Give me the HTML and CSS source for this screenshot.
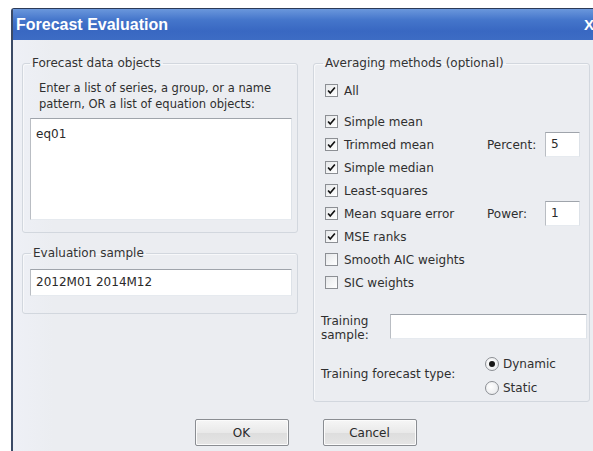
FILE: index.html
```html
<!DOCTYPE html>
<html>
<head>
<meta charset="utf-8">
<title>Forecast Evaluation</title>
<link rel="stylesheet" href="styles.css">
</head>
<body>
<div class="window">
  <div class="titlebar">
    <span class="title">Forecast Evaluation</span>
    <span class="close">X</span>
  </div>
  <div class="content">
    <div class="columns">
      <div class="leftcol">
        <fieldset class="group g-objects">
          <legend>Forecast data objects</legend>
          <p class="hint">Enter a list of series, a group, or a name<br>pattern, OR a list of equation objects:</p>
          <div class="edit textarea">eq01</div>
        </fieldset>
        <fieldset class="group g-sample">
          <legend>Evaluation sample</legend>
          <div class="edit sample">2012M01 2014M12</div>
        </fieldset>
      </div>

      <fieldset class="group g-avg">
        <legend>Averaging methods (optional)</legend>
        <div class="row all">
          <label class="check"><span class="box on"><svg viewBox="0 0 13 13"><path d="M2.5 6.5 L5 9.5 L10.5 3"/></svg></span>All</label>
        </div>
        <div class="methods">
          <div class="row"><label class="check"><span class="box on"><svg viewBox="0 0 13 13"><path d="M2.5 6.5 L5 9.5 L10.5 3"/></svg></span>Simple mean</label></div>
          <div class="row"><label class="check"><span class="box on"><svg viewBox="0 0 13 13"><path d="M2.5 6.5 L5 9.5 L10.5 3"/></svg></span>Trimmed mean</label><span class="param">Percent:</span><div class="edit small">5</div></div>
          <div class="row"><label class="check"><span class="box on"><svg viewBox="0 0 13 13"><path d="M2.5 6.5 L5 9.5 L10.5 3"/></svg></span>Simple median</label></div>
          <div class="row"><label class="check"><span class="box on"><svg viewBox="0 0 13 13"><path d="M2.5 6.5 L5 9.5 L10.5 3"/></svg></span>Least-squares</label></div>
          <div class="row"><label class="check"><span class="box on"><svg viewBox="0 0 13 13"><path d="M2.5 6.5 L5 9.5 L10.5 3"/></svg></span>Mean square error</label><span class="param">Power:</span><div class="edit small">1</div></div>
          <div class="row"><label class="check"><span class="box on"><svg viewBox="0 0 13 13"><path d="M2.5 6.5 L5 9.5 L10.5 3"/></svg></span>MSE ranks</label></div>
          <div class="row"><label class="check"><span class="box"></span>Smooth AIC weights</label></div>
          <div class="row"><label class="check"><span class="box"></span>SIC weights</label></div>
        </div>
        <div class="training">
          <span class="tlabel">Training<br>sample:</span>
          <div class="edit tfield"></div>
        </div>
        <div class="ftype">
          <span class="flabel">Training forecast type:</span>
          <div class="radios">
            <label class="radio"><span class="dot on"></span>Dynamic</label>
            <label class="radio"><span class="dot"></span>Static</label>
          </div>
        </div>
      </fieldset>
    </div>
    <div class="buttons">
      <button class="btn">OK</button>
      <button class="btn">Cancel</button>
    </div>
  </div>
</div>
</body>
</html>
```

FILE: styles.css
```css
html, body {
  margin: 0;
  padding: 0;
  background: #ffffff;
  overflow: hidden;
}

body {
  font-family: "DejaVu Sans", Tahoma, sans-serif;
  font-size: 12px;
  color: #2f2f2f;
}

/* dialog frame */
.window {
  margin: 8px 0 0 11px;
  width: 587px;
  height: 443px;
  border-left: 2px solid #3b4a66;
  border-top: 1px solid #2c3b58;
  border-radius: 3px 0 0 0;
  background: linear-gradient(90deg, #eef0f6 0, #ebedf1 40px);
  box-sizing: border-box;
}

.titlebar {
  height: 31px;
  display: flex;
  align-items: center;
  justify-content: space-between;
  padding: 0 4px 0 3px;
  background: linear-gradient(#6a97dc 0, #4576cb 35%, #3968c2 70%, #3d6cc4 100%);
  color: #ffffff;
  font-family: "Liberation Sans", Arial, sans-serif;
  font-weight: bold;
  font-size: 16px;
}

.close {
  font-size: 15px;
}

.content {
  padding: 16px 0 0 9px;
}

.columns {
  display: flex;
  align-items: flex-start;
  gap: 15px;
}

/* group boxes */
.group {
  margin: 0;
  border: 1px solid #d2d7de;
  border-radius: 3px;
  box-shadow: inset 1px 1px 0 #f7f8fa;
  min-width: 0;
}

.group legend {
  padding: 0 2px;
  margin-left: 0;
  line-height: 14px;
  color: #333333;
}

.leftcol {
  width: 276px;
  display: flex;
  flex-direction: column;
  gap: 13px;
}

.g-objects {
  padding: 10px 5px 12px 7px;
}

.hint {
  margin: 0 0 6px 9px;
  line-height: 16px;
  font-size: 11.5px;
}

/* text fields */
.edit {
  background: #ffffff;
  border: 1px solid;
  border-color: #9fa4ab #dde2e8 #e6eaef #b9bdc3;
  box-sizing: border-box;
  padding: 4px 5px;
  line-height: 15px;
  color: #2a2a2a;
}

.textarea {
  height: 102px;
  padding-top: 8px;
}

.g-sample {
  padding: 9px 5px 17px 7px;
}

.g-sample legend {
  margin-left: 1px;
}

.sample {
  height: 27px;
  padding-top: 5px;
}

/* averaging methods */
.g-avg {
  width: 277px;
  box-sizing: border-box;
  padding: 9px 9px 1px 11px;
}

.g-avg legend {
  margin-left: -2px;
}

.row {
  height: 23px;
  display: flex;
  align-items: center;
}

.methods {
  margin-top: 8px;
}

.check {
  flex: 1;
  display: flex;
  align-items: center;
  gap: 6px;
}

.box {
  width: 13px;
  height: 13px;
  box-sizing: border-box;
  border: 1px solid #8c8f94;
  background: linear-gradient(135deg, #e6e8ea, #ffffff);
  display: inline-flex;
}

.box svg {
  display: none;
  width: 11px;
  height: 11px;
}

.box.on svg {
  display: block;
}

.box path {
  fill: none;
  stroke: #111111;
  stroke-width: 2;
}

.param {
  width: 58px;
}

.small {
  width: 35px;
  height: 25px;
  padding-top: 4px;
}

.training {
  margin: 16px -7px 0 -4px;
  display: flex;
  align-items: center;
  gap: 21px;
}

.tlabel {
  line-height: 14px;
  padding-top: 4px;
}

.tfield {
  flex: 1;
  height: 25px;
}

.ftype {
  margin: 10px 0 0 -4px;
  display: flex;
  align-items: center;
}

.flabel {
  width: 164px;
  padding-bottom: 5px;
}

.radios {
  display: flex;
  flex-direction: column;
}

.radio {
  height: 24px;
  display: flex;
  align-items: center;
  gap: 4px;
}

.dot {
  width: 14px;
  height: 14px;
  box-sizing: border-box;
  border-radius: 50%;
  border: 1px solid #8c8f94;
  background: radial-gradient(circle at 40% 40%, #ffffff, #e3e5e8);
  display: inline-flex;
  align-items: center;
  justify-content: center;
}

.dot.on::after {
  content: "";
  width: 6px;
  height: 6px;
  border-radius: 50%;
  background: #151515;
}

/* OK / Cancel */
.buttons {
  margin-top: 17px;
  display: flex;
  justify-content: center;
  gap: 34px;
  padding-right: 9px;
}

.btn {
  width: 94px;
  height: 27px;
  font-family: "DejaVu Sans", Tahoma, sans-serif;
  font-size: 12px;
  color: #2a2a2a;
  border: 1px solid #8a8d92;
  border-radius: 2px;
  background: linear-gradient(#f6f6f6, #e9e9e9 50%, #dddddd 51%, #e5e5e5);
  box-shadow: inset 0 0 0 1px #fbfbfb;
}
```
